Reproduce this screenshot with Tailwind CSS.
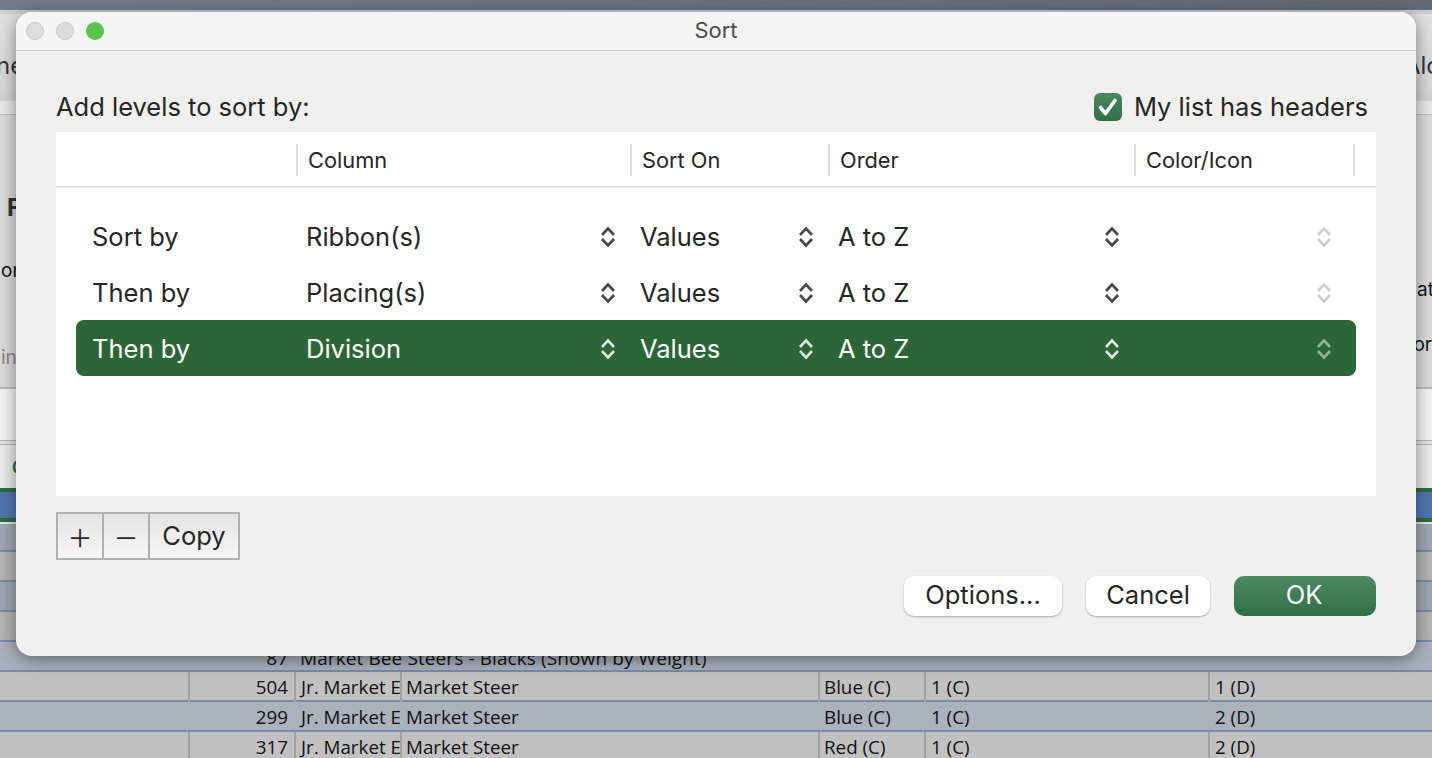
<!DOCTYPE html>
<html lang="en">

<head>
  <meta charset="UTF-8" />
  <title>Sort</title>
  <script src="https://cdn.jsdelivr.net/npm/@tailwindcss/browser@4"></script>
</head>

<body class="w-[1432px] h-[758px] overflow-hidden bg-[#e8e8e8] font-['Inter',sans-serif]">

  <div class="relative w-[1432px] h-[758px] overflow-hidden">

    <!-- Excel window behind the dialog -->
    <div class="h-[10px] bg-linear-to-r from-[#737c8b] to-[#646a75]"></div>
    <div class="h-[4px] bg-[#cfcfcf]"></div>

    <!-- ribbon -->
    <div class="h-[79px] bg-linear-to-b from-[#e2e2e2] to-[#d9d9d9] flex justify-between items-start pt-[38px] text-[24px] leading-[28px] text-[#333]">
      <span class="ml-[-4px]">ne</span>
      <span class="mr-[-8px]">Alc</span>
    </div>
    <div class="h-[8px] bg-[#d4d4d4]"></div>
    <div class="h-[14px] bg-[#e9e9e9] border-b border-[#bdbdbd]"></div>

    <!-- form area -->
    <div class="relative h-[274px] bg-linear-to-r from-[#dcdcdc] via-[#f2f2f2] to-[#dcdcdc] border-b-2 border-[#bcbcbc] text-[#111]">
      <span class="absolute left-[7px] top-[79px] text-[24px] leading-[28px] font-bold text-[#333]">F</span>
      <span class="absolute left-[1px] top-[144px] text-[19px] leading-[24px]">or</span>
      <span class="absolute left-[1px] top-[231px] text-[19px] leading-[24px] text-[#8a8a8a]">in</span>
      <span class="absolute right-[-2px] top-[163px] text-[19px] leading-[24px]">at</span>
      <span class="absolute right-[0px] top-[218px] text-[19px] leading-[24px]">or</span>
    </div>
    <div class="h-[52px] bg-[#f4f4f4] border-b border-[#b5b5b5]"></div>
    <div class="h-[4px] bg-[#e6e6e6] border-b border-[#b5b5b5]"></div>
    <div class="h-[43px] bg-[#ececec] pl-[12px] pt-[11px] text-[18px] leading-[24px] font-semibold text-[#2c6b3a]">C</div>

    <!-- sheet -->
    <div class="h-[4px] bg-[#2f6b41]"></div>
    <div class="h-[26px] bg-[#5077b0]"></div>
    <div class="h-[4px] bg-[#2f6b41]"></div>
    <div class="h-[2px] bg-[#e6e6e6]"></div>
    <div class="h-[28px] bg-[#a0a8b3] border-b-2 border-[#7a8ba8]"></div>
    <div class="h-[30px] bg-[#b5b5b5] border-b-2 border-[#7a8ba8]"></div>
    <div class="h-[30px] bg-[#a0a8b3] border-b-2 border-[#7a8ba8]"></div>
    <div class="h-[30px] bg-[#b5b5b5] border-b-2 border-[#7a8ba8]"></div>

    <div class="h-[30px] bg-[#a9b1bc] border-b-2 border-[#7a8ba8] grid grid-cols-[288px_1fr] gap-[12px] font-['Open_Sans',sans-serif] text-[19px] leading-[24px] text-[#111] pt-[4px]">
      <span class="text-right">87</span>
      <span class="tracking-[0.1px]">Market Bee Steers - Blacks (Shown by Weight)</span>
    </div>

    <div class="h-[30px] bg-[#c1c1c1] border-b-2 border-[#7a8ba8] grid grid-cols-[188px_106px_106px_418px_106px_284px_1fr] font-['Open_Sans',sans-serif] text-[18.8px] leading-[30px] text-[#111]">
      <span></span>
      <span class="border-l-2 border-[#a2a2a2] pr-[6px] text-right">504</span>
      <span class="border-l-2 border-[#a2a2a2] pl-[5px] overflow-hidden whitespace-nowrap">Jr. Market E</span>
      <span class="border-l-2 border-[#a2a2a2] pl-[4px]">Market Steer</span>
      <span class="border-l-2 border-[#a2a2a2] pl-[4px]">Blue (C)</span>
      <span class="border-l-2 border-[#a2a2a2] pl-[5px]">1 (C)</span>
      <span class="border-l-2 border-[#a2a2a2] pl-[5px]">1 (D)</span>
    </div>
    <div class="h-[30px] bg-[#aab2bc] border-b-2 border-[#7a8ba8] grid grid-cols-[188px_106px_106px_418px_106px_284px_1fr] font-['Open_Sans',sans-serif] text-[18.8px] leading-[30px] text-[#111]">
      <span></span>
      <span class="pl-[2px] pr-[6px] text-right">299</span>
      <span class="pl-[7px] overflow-hidden whitespace-nowrap">Jr. Market E</span>
      <span class="pl-[6px]">Market Steer</span>
      <span class="pl-[6px]">Blue (C)</span>
      <span class="pl-[7px]">1 (C)</span>
      <span class="pl-[7px]">2 (D)</span>
    </div>
    <div class="h-[26px] bg-[#c1c1c1] grid grid-cols-[188px_106px_106px_418px_106px_284px_1fr] font-['Open_Sans',sans-serif] text-[18.8px] leading-[30px] text-[#111]">
      <span></span>
      <span class="border-l-2 border-[#a2a2a2] pr-[6px] text-right">317</span>
      <span class="border-l-2 border-[#a2a2a2] pl-[5px] overflow-hidden whitespace-nowrap">Jr. Market E</span>
      <span class="border-l-2 border-[#a2a2a2] pl-[4px]">Market Steer</span>
      <span class="border-l-2 border-[#a2a2a2] pl-[4px]">Red (C)</span>
      <span class="border-l-2 border-[#a2a2a2] pl-[5px]">1 (C)</span>
      <span class="border-l-2 border-[#a2a2a2] pl-[5px]">2 (D)</span>
    </div>

    <!-- Sort dialog -->
    <div class="absolute left-[16px] top-[12px] w-[1400px] h-[644px] rounded-[16px] bg-[#f0f0ef] overflow-hidden shadow-[0_3px_18px_rgba(0,0,0,0.45)] text-[#262626]">

      <!-- title bar -->
      <div class="relative h-[39px] bg-[#f5f5f4] border-b border-[#cfcfcd] flex items-center justify-center pb-[2px] text-[22px] text-[#4c4c4c]">
        <div class="absolute left-[10px] top-[10px] flex gap-[12px]">
          <span class="w-[18px] h-[18px] rounded-full bg-[#dddddb] border border-[#c8c8c6]"></span>
          <span class="w-[18px] h-[18px] rounded-full bg-[#dddddb] border border-[#c8c8c6]"></span>
          <span class="w-[18px] h-[18px] rounded-full bg-[#5ac451]"></span>
        </div>
        Sort
      </div>

      <div class="px-[40px] pt-[40px]">
        <!-- heading row -->
        <div class="h-[32px] flex items-center justify-between pr-[8px] text-[25.5px]">
          <span>Add levels to sort by:</span>
          <label class="flex items-center gap-[12px]">
            <span class="w-[28px] h-[28px] rounded-[6px] bg-linear-to-b from-[#4a8a63] to-[#2f6f47] flex items-center justify-center">
              <svg width="22" height="20" viewBox="0 0 22 20" fill="none" stroke="#fff" stroke-width="3.6" stroke-linecap="round" stroke-linejoin="round">
                <path d="M3.5 10.5 L8.5 16.5 L18 3.5" />
              </svg>
            </span>
            My list has headers
          </label>
        </div>

        <!-- levels table -->
        <div class="mt-[9px] h-[364px] bg-white">
          <div class="h-[56px] border-b-2 border-[#e3e3e3] pt-[12px] grid grid-cols-[240px_334px_198px_306px_221px] text-[21.8px]">
            <span></span>
            <span class="h-[32px] border-l-2 border-[#dedede] pl-[10px] leading-[32px]">Column</span>
            <span class="h-[32px] border-l-2 border-[#dedede] pl-[10px] leading-[32px]">Sort On</span>
            <span class="h-[32px] border-l-2 border-[#dedede] pl-[10px] leading-[32px]">Order</span>
            <span class="h-[32px] border-x-2 border-[#dedede] pl-[10px] leading-[32px]">Color/Icon</span>
          </div>

          <div class="px-[20px] pt-[20px] text-[25.5px]">
            <div class="h-[56px] pt-[2px] grid grid-cols-[230px_334px_198px_306px_212px] items-center">
              <span class="pl-[16px]">Sort by</span>
              <div class="flex items-center justify-between pr-[25px]">Ribbon(s)
                <svg width="14" height="22" viewBox="0 0 14 22" fill="none" stroke="#4a4a4a" stroke-width="2.6"><path d="M1 9 L7 2.5 L13 9 M1 13 L7 19.5 L13 13" /></svg>
              </div>
              <div class="flex items-center justify-between pr-[25px]">Values
                <svg width="14" height="22" viewBox="0 0 14 22" fill="none" stroke="#4a4a4a" stroke-width="2.6"><path d="M1 9 L7 2.5 L13 9 M1 13 L7 19.5 L13 13" /></svg>
              </div>
              <div class="flex items-center justify-between pr-[25px]">A to Z
                <svg width="14" height="22" viewBox="0 0 14 22" fill="none" stroke="#4a4a4a" stroke-width="2.6"><path d="M1 9 L7 2.5 L13 9 M1 13 L7 19.5 L13 13" /></svg>
              </div>
              <div class="flex items-center justify-end pr-[25px]">
                <svg width="14" height="22" viewBox="0 0 14 22" fill="none" stroke="#d0d0d0" stroke-width="2.6"><path d="M1 9 L7 2.5 L13 9 M1 13 L7 19.5 L13 13" /></svg>
              </div>
            </div>

            <div class="h-[56px] pt-[2px] grid grid-cols-[230px_334px_198px_306px_212px] items-center">
              <span class="pl-[16px]">Then by</span>
              <div class="flex items-center justify-between pr-[25px]">Placing(s)
                <svg width="14" height="22" viewBox="0 0 14 22" fill="none" stroke="#4a4a4a" stroke-width="2.6"><path d="M1 9 L7 2.5 L13 9 M1 13 L7 19.5 L13 13" /></svg>
              </div>
              <div class="flex items-center justify-between pr-[25px]">Values
                <svg width="14" height="22" viewBox="0 0 14 22" fill="none" stroke="#4a4a4a" stroke-width="2.6"><path d="M1 9 L7 2.5 L13 9 M1 13 L7 19.5 L13 13" /></svg>
              </div>
              <div class="flex items-center justify-between pr-[25px]">A to Z
                <svg width="14" height="22" viewBox="0 0 14 22" fill="none" stroke="#4a4a4a" stroke-width="2.6"><path d="M1 9 L7 2.5 L13 9 M1 13 L7 19.5 L13 13" /></svg>
              </div>
              <div class="flex items-center justify-end pr-[25px]">
                <svg width="14" height="22" viewBox="0 0 14 22" fill="none" stroke="#d0d0d0" stroke-width="2.6"><path d="M1 9 L7 2.5 L13 9 M1 13 L7 19.5 L13 13" /></svg>
              </div>
            </div>

            <!-- selected level -->
            <div class="h-[56px] pt-[2px] grid grid-cols-[230px_334px_198px_306px_212px] items-center rounded-[8px] bg-[#2c6636] text-white">
              <span class="pl-[16px]">Then by</span>
              <div class="flex items-center justify-between pr-[25px]">Division
                <svg width="14" height="22" viewBox="0 0 14 22" fill="none" stroke="#dbe5dd" stroke-width="2.6"><path d="M1 9 L7 2.5 L13 9 M1 13 L7 19.5 L13 13" /></svg>
              </div>
              <div class="flex items-center justify-between pr-[25px]">Values
                <svg width="14" height="22" viewBox="0 0 14 22" fill="none" stroke="#dbe5dd" stroke-width="2.6"><path d="M1 9 L7 2.5 L13 9 M1 13 L7 19.5 L13 13" /></svg>
              </div>
              <div class="flex items-center justify-between pr-[25px]">A to Z
                <svg width="14" height="22" viewBox="0 0 14 22" fill="none" stroke="#dbe5dd" stroke-width="2.6"><path d="M1 9 L7 2.5 L13 9 M1 13 L7 19.5 L13 13" /></svg>
              </div>
              <div class="flex items-center justify-end pr-[25px]">
                <svg width="14" height="22" viewBox="0 0 14 22" fill="none" stroke="#8fb39a" stroke-width="2.6"><path d="M1 9 L7 2.5 L13 9 M1 13 L7 19.5 L13 13" /></svg>
              </div>
            </div>
          </div>
        </div>

        <!-- add / remove / copy -->
        <div class="mt-[16px] w-[184px] h-[48px] flex border-2 border-[#b0b0b0] bg-linear-to-b from-[#e5e5e5] to-[#f6f6f6] text-[25.5px]">
          <button class="w-[46px] border-r-2 border-[#b0b0b0] pb-[2px] text-[42px] font-extralight leading-[40px]">+</button>
          <button class="w-[46px] border-r-2 border-[#b0b0b0] pb-[2px] text-[42px] font-extralight leading-[40px]">−</button>
          <button class="flex-1">Copy</button>
        </div>

        <!-- dialog buttons -->
        <div class="mt-[16px] flex justify-end text-[25.5px]">
          <button class="w-[158px] h-[40px] pb-[2px] rounded-[10px] bg-white shadow-[0_1px_2px_rgba(0,0,0,0.3)]">Options...</button>
          <button class="ml-[24px] w-[124px] h-[40px] pb-[2px] rounded-[10px] bg-white shadow-[0_1px_2px_rgba(0,0,0,0.3)]">Cancel</button>
          <button class="ml-[24px] w-[142px] h-[40px] pb-[2px] pr-[2px] rounded-[10px] bg-linear-to-b from-[#4c8a64] to-[#2f6f47] text-white">OK</button>
        </div>
      </div>
    </div>

  </div>

</body>

</html>
